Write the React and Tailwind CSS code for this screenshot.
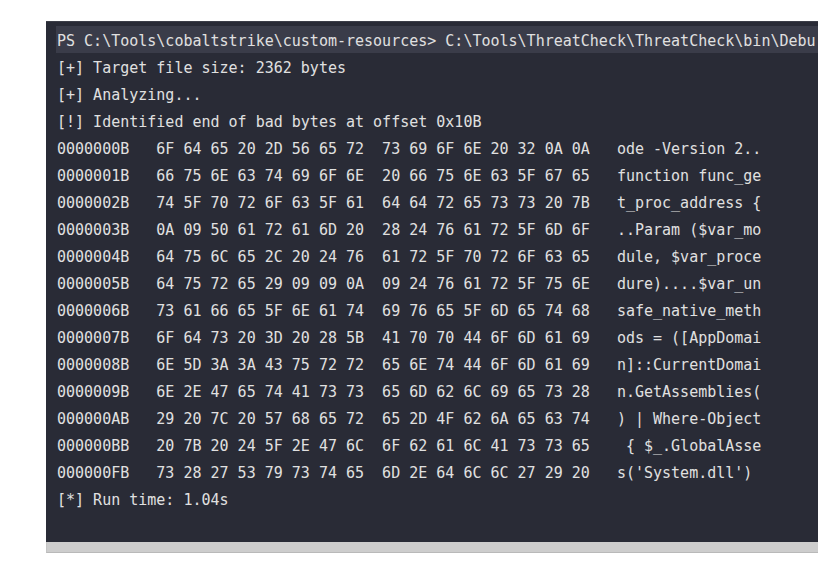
const HEX_ROWS = [
  ['0000000B', '6F 64 65 20 2D 56 65 72  73 69 6F 6E 20 32 0A 0A', 'ode -Version 2..'],
  ['0000001B', '66 75 6E 63 74 69 6F 6E  20 66 75 6E 63 5F 67 65', 'function func_ge'],
  ['0000002B', '74 5F 70 72 6F 63 5F 61  64 64 72 65 73 73 20 7B', 't_proc_address {'],
  ['0000003B', '0A 09 50 61 72 61 6D 20  28 24 76 61 72 5F 6D 6F', '..Param ($var_mo'],
  ['0000004B', '64 75 6C 65 2C 20 24 76  61 72 5F 70 72 6F 63 65', 'dule, $var_proce'],
  ['0000005B', '64 75 72 65 29 09 09 0A  09 24 76 61 72 5F 75 6E', 'dure)....$var_un'],
  ['0000006B', '73 61 66 65 5F 6E 61 74  69 76 65 5F 6D 65 74 68', 'safe_native_meth'],
  ['0000007B', '6F 64 73 20 3D 20 28 5B  41 70 70 44 6F 6D 61 69', 'ods = ([AppDomai'],
  ['0000008B', '6E 5D 3A 3A 43 75 72 72  65 6E 74 44 6F 6D 61 69', 'n]::CurrentDomai'],
  ['0000009B', '6E 2E 47 65 74 41 73 73  65 6D 62 6C 69 65 73 28', 'n.GetAssemblies('],
  ['000000AB', '29 20 7C 20 57 68 65 72  65 2D 4F 62 6A 65 63 74', ') | Where-Object'],
  ['000000BB', '20 7B 20 24 5F 2E 47 6C  6F 62 61 6C 41 73 73 65', ' { $_.GlobalAsse'],
  ['000000FB', '73 28 27 53 79 73 74 65  6D 2E 64 6C 6C 27 29 20', "s('System.dll')"],
]

function Line({ children, highlight }) {
  return (
    <div className={'h-[27px] pt-[4px] leading-[23px] whitespace-pre pl-px ' + (highlight ? 'bg-[#3a3c49]' : '')}>
      {children}
    </div>
  )
}

export default function App() {
  return (
    <div className="w-[818px] h-[567px] bg-white overflow-hidden pt-[21px] pl-[46px]">
      <div className="w-[772px] overflow-hidden">
        <div
          className="bg-[#292b36] border-t border-[#3c3e48] pt-[4px] pl-[10px] pb-[30px] text-[#e0e0e0] text-[15px]"
          style={{ fontFamily: '"DejaVu Sans Mono", "Liberation Mono", monospace' }}
        >
          <Line highlight>
            {'PS C:\\Tools\\cobaltstrike\\custom-resources> C:\\Tools\\ThreatCheck\\ThreatCheck\\bin\\Debu'}
          </Line>
          <Line>[+] Target file size: 2362 bytes</Line>
          <Line>[+] Analyzing...</Line>
          <Line>[!] Identified end of bad bytes at offset 0x10B</Line>
          {HEX_ROWS.map(([off, hex, ascii]) => (
            <Line key={off}>{off + '   ' + hex + '   ' + ascii}</Line>
          ))}
          <Line>[*] Run time: 1.04s</Line>
        </div>
        {/* horizontal scrollbar */}
        <div className="h-[11px] bg-[#cdcdcd] border-b border-[#b9b9b9] border-l border-l-[#c4c4c4]" />
      </div>
    </div>
  )
}
